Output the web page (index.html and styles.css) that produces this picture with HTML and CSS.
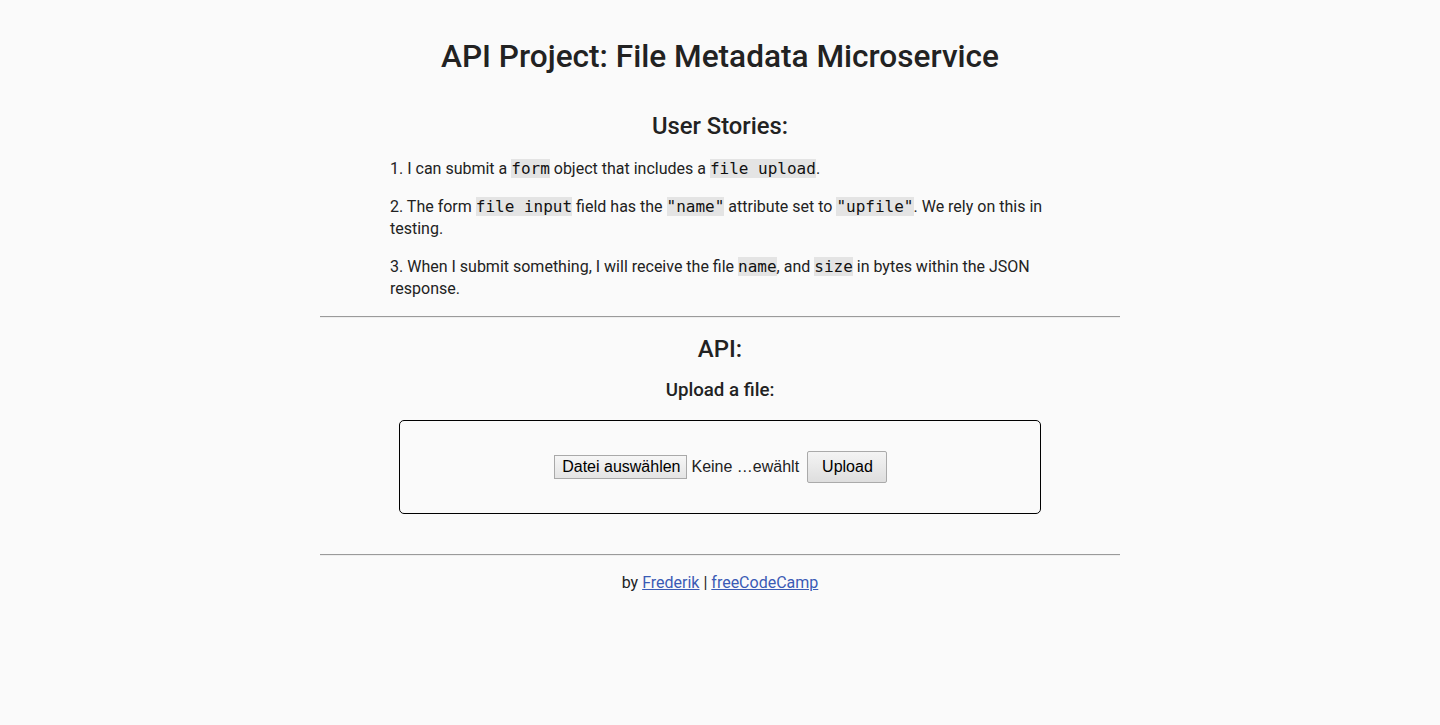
FILE: index.html
```html
<!DOCTYPE html>
<html lang="en">
<head>
<meta charset="utf-8">
<title>File Metadata Microservice</title>
<link rel="stylesheet" href="styles.css">
</head>
<body>
<div class="container">
  <h1 class="title">API Project: File Metadata Microservice</h1>
  <h2 class="subtitle">User Stories:</h2>
  <div class="stories">
    <p>1. I can submit a <code>form</code> object that includes a <code>file upload</code>.</p>
    <p>2. The form <code>file input</code> field has the <code>"name"</code> attribute set to <code>"upfile"</code>. We rely on this in testing.</p>
    <p>3. When I submit something, I will receive the file <code>name</code>, and <code>size</code> in bytes within the JSON response.</p>
  </div>
  <hr class="rule">
  <h3 class="api-title">API:</h3>
  <h4 class="upload-title">Upload a file:</h4>
  <form class="upload-form">
    <span class="file-input"><span class="file-btn">Datei auswählen</span><span class="file-label">Keine …ewählt</span></span>
    <button type="button" class="submit-btn">Upload</button>
  </form>
  <hr class="rule rule-bottom">
  <p class="footer">by <a href="#">Frederik</a> | <a href="#">freeCodeCamp</a></p>
</div>
</body>
</html>
```

FILE: styles.css
```css
html, body {
  margin: 0;
  padding: 0;
}
body {
  background: #fafafa;
  color: #222;
  font-family: Roboto, "Noto Sans", sans-serif;
  font-size: 16px;
  line-height: 22px;
}
.container {
  width: 800px;
  margin: 0 auto;
  padding-top: 35px;
  text-align: center;
}
.title {
  margin: 0;
  font-size: 31.6px;
  line-height: 44px;
  font-weight: 500;
}
.subtitle {
  margin: 31px 0 0;
  font-size: 23.8px;
  line-height: 33px;
  font-weight: 500;
}
.stories {
  text-align: left;
  padding: 0 70px;
  margin-top: 15px;
}
.stories p {
  margin: 0 0 16px;
}
.stories p:last-child {
  margin-bottom: 0;
}
code {
  font-family: "DejaVu Sans Mono", monospace;
  font-size: 16px;
  line-height: 20px;
  background: #e4e4e4;
  color: #111;
}
.rule {
  margin: 16px 0 0;
  border: 0;
  border-top: 1px solid #9a9a9a;
  border-bottom: 1px solid #eee;
  height: 0;
}
.api-title {
  margin: 15px 0 0;
  font-size: 24px;
  line-height: 33px;
  font-weight: 500;
}
.upload-title {
  margin: 11px 0 0;
  font-size: 18.7px;
  line-height: 26px;
  font-weight: 500;
}
.upload-form {
  width: 640px;
  height: 92px;
  margin: 17px auto 0;
  border: 1px solid #000;
  border-radius: 5px;
  display: flex;
  align-items: center;
  justify-content: center;
  font-family: "Liberation Sans", Arial, sans-serif;
  font-size: 16px;
}
.file-input {
  display: inline-flex;
  align-items: center;
  margin-left: 1px;
}
.file-btn {
  display: inline-block;
  height: 22px;
  line-height: 22px;
  padding: 0 6px 0 7px;
  border: 1px solid #a9a9a9;
  background: linear-gradient(#f6f6f6, #e4e4e4);
  color: #000;
}
.file-label {
  margin-left: 4px;
  color: #222;
}
.submit-btn {
  margin-left: 8px;
  height: 32px;
  padding: 0 13px 0 14px;
  font-family: "Liberation Sans", Arial, sans-serif;
  font-size: 16px;
  color: #000;
  border: 1px solid #aaa;
  border-radius: 2px;
  background: linear-gradient(#f4f4f4, #dedede);
}
.rule-bottom {
  margin-top: 40px;
}
.footer {
  margin: 16px 0 0;
}
.footer a {
  color: #3a5bb5;
}
```
